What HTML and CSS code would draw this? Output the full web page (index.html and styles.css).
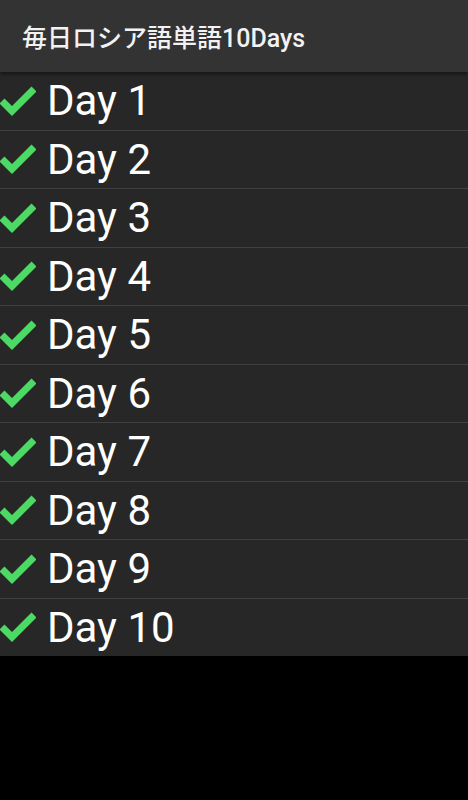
FILE: index.html
```html
<!DOCTYPE html>
<html lang="ja">
<head>
    <meta charset="UTF-8">
    <meta name="viewport" content="width=device-width, initial-scale=1.0">
    <title>毎日ロシア語単語10Days</title>
    <link rel="stylesheet" href="styles.css">
</head>
<body>

    <div class="action-bar">
        <h1 class="title">毎日ロシア語単語10Days</h1>
    </div>

    <ul class="day-list">
        <li class="day-row"><svg class="check" viewBox="0 0 36 32"><polyline points="2,15 12,25 34,3"/></svg><span class="day-name">Day 1</span></li>
        <li class="day-row"><svg class="check" viewBox="0 0 36 32"><polyline points="2,15 12,25 34,3"/></svg><span class="day-name">Day 2</span></li>
        <li class="day-row"><svg class="check" viewBox="0 0 36 32"><polyline points="2,15 12,25 34,3"/></svg><span class="day-name">Day 3</span></li>
        <li class="day-row"><svg class="check" viewBox="0 0 36 32"><polyline points="2,15 12,25 34,3"/></svg><span class="day-name">Day 4</span></li>
        <li class="day-row"><svg class="check" viewBox="0 0 36 32"><polyline points="2,15 12,25 34,3"/></svg><span class="day-name">Day 5</span></li>
        <li class="day-row"><svg class="check" viewBox="0 0 36 32"><polyline points="2,15 12,25 34,3"/></svg><span class="day-name">Day 6</span></li>
        <li class="day-row"><svg class="check" viewBox="0 0 36 32"><polyline points="2,15 12,25 34,3"/></svg><span class="day-name">Day 7</span></li>
        <li class="day-row"><svg class="check" viewBox="0 0 36 32"><polyline points="2,15 12,25 34,3"/></svg><span class="day-name">Day 8</span></li>
        <li class="day-row"><svg class="check" viewBox="0 0 36 32"><polyline points="2,15 12,25 34,3"/></svg><span class="day-name">Day 9</span></li>
        <li class="day-row"><svg class="check" viewBox="0 0 36 32"><polyline points="2,15 12,25 34,3"/></svg><span class="day-name">Day 10</span></li>
    </ul>

</body>
</html>
```

FILE: styles.css
```css
body {
    margin: 0;
    background-color: #000;
    font-family: Roboto, "Noto Sans CJK JP", sans-serif;
    color: #fff;
}
.action-bar {
    height: 72px;
    background-color: #333333;
    display: flex;
    align-items: center;
    padding-left: 22px;
    box-shadow: 0 2px 4px rgba(0, 0, 0, 0.5);
    position: relative;
    z-index: 1;
}
.title {
    margin: 0;
    font-size: 25px;
    font-weight: 500;
    color: #f2f2f2;
}
.day-list {
    list-style: none;
    margin: 0;
    padding: 0;
    background-color: #272727;
}
.day-row {
    height: 57.5px;
    display: flex;
    align-items: center;
    border-top: 1px solid #404040;
}
.day-row:first-child {
    border-top: none;
}
.check {
    width: 36px;
    height: 32px;
    margin-right: 11px;
    margin-top: 2px;
}
.check polyline {
    fill: none;
    stroke: #4cd964;
    stroke-width: 7;
}
.day-name {
    font-size: 42px;
}
```
